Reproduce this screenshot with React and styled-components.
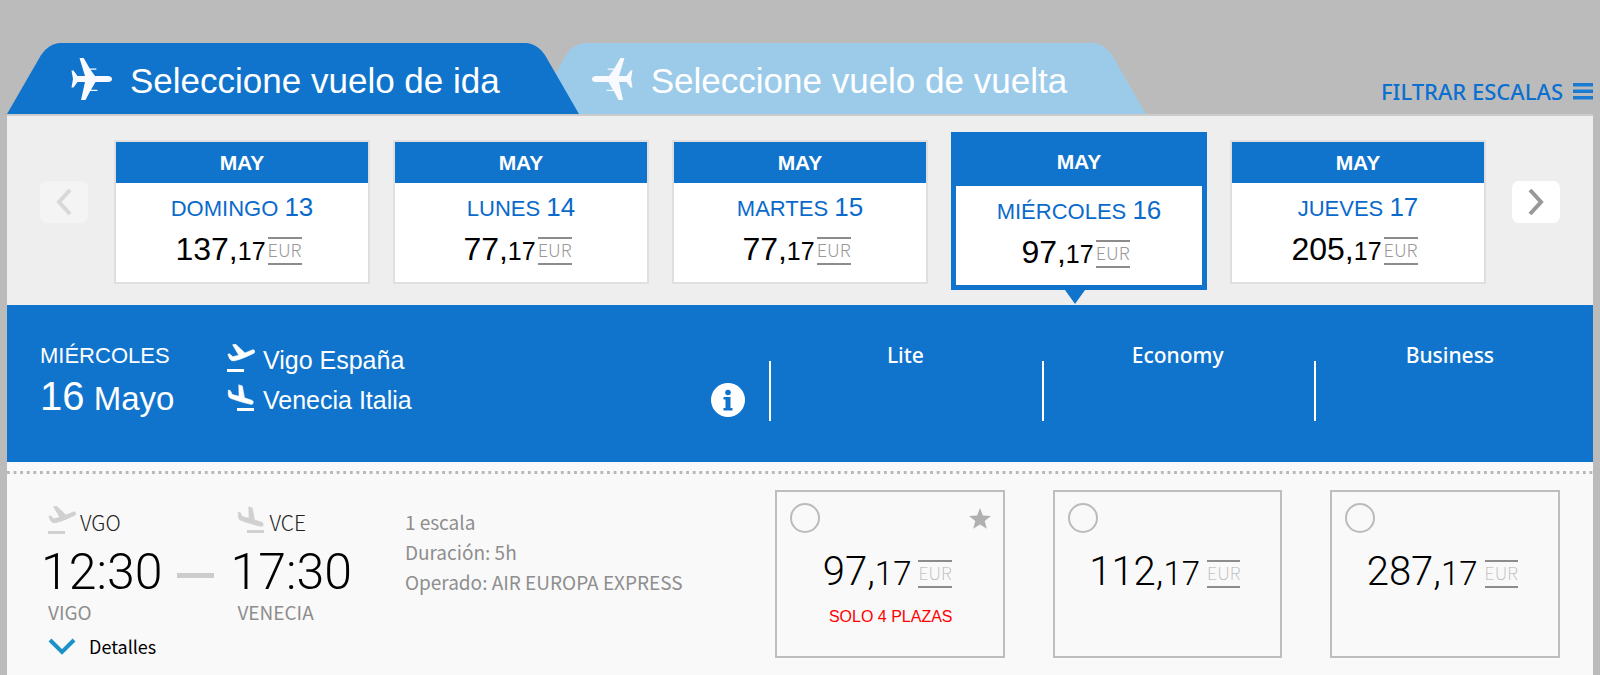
import React, { useState } from "react";
import styled, { createGlobalStyle, css } from "styled-components";

const GlobalStyle = createGlobalStyle`
  * {
    box-sizing: border-box;
  }

  body {
    margin: 0;
    background: #bbbbbb;
    font-family: "Liberation Sans", Arial, sans-serif;
    color: #000;
  }

  button {
    margin: 0;
    padding: 0;
    border: 0;
    background: none;
    color: inherit;
    font: inherit;
    cursor: pointer;
  }
`;

const blue = "#1074cc";
const sourceSans = `"Noto Sans CJK SC", "Noto Sans", sans-serif`;
const openSans = `"Noto Sans", "Open Sans", sans-serif`;

const Page = styled.div`
  padding: 43px 7px 0;
`;

const TopBar = styled.header`
  display: flex;
  align-items: flex-end;
  justify-content: space-between;
`;

const TabList = styled.div`
  display: flex;
`;

const Tab = styled.button`
  position: relative;
  z-index: ${(props) => (props.$active ? 2 : 1)};
  display: flex;
  align-items: center;
  gap: 18px;
  height: 71px;
  padding: 4px 79px 0 64px;
  color: #fff;
  font-size: 35px;
  white-space: nowrap;

  svg {
    margin-bottom: 4px;
  }

  & + & {
    margin-left: -47px;
    padding-left: 60px;
  }

  &::before,
  &::after {
    content: "";
    position: absolute;
    z-index: -1;
    top: 0;
    bottom: 0;
    width: 60%;
    background: ${(props) => (props.$active ? blue : "#9ccbea")};
  }

  &::before {
    left: 0;
    border-top-left-radius: 12px;
    transform: skewX(-30deg);
    transform-origin: bottom;
  }

  &::after {
    right: 0;
    border-top-right-radius: 12px;
    transform: skewX(30deg);
    transform-origin: bottom;
  }
`;

const FilterButton = styled.button`
  display: flex;
  align-items: center;
  gap: 10px;
  margin-bottom: 8px;
  color: #0a6fd0;
  font-family: ${openSans};
  font-size: 22px;
  font-weight: 500;
  line-height: 30px;
`;

const Panel = styled.main`
  border-top: 2px solid #cccccc;
  background: #f9f9f9;
`;

const Calendar = styled.section`
  display: flex;
  align-items: flex-start;
  gap: 26px;
  padding: 24px 33px 21px;
  background: #eeeeee;
`;

const Arrow = styled.button`
  display: flex;
  align-items: center;
  justify-content: center;
  width: 48px;
  height: 42px;
  margin-top: 41px;
  border-radius: 7px;
  background: #fff;
  color: #999;

  &:disabled {
    background: #f4f4f4;
    color: #d8d8d8;
    cursor: default;
  }
`;

const Days = styled.div`
  flex: 1;
  display: grid;
  grid-template-columns: repeat(5, 1fr);
  gap: 23px;
`;

const DayMonth = styled.span`
  display: block;
  background: ${blue};
  color: #fff;
  font-size: 21px;
  font-weight: bold;
  line-height: 41px;
`;

const DayName = styled.span`
  display: block;
  padding-top: 8px;
  color: #0a6acb;
  font-size: 22px;
  line-height: 32px;
`;

const DayNumber = styled.span`
  font-size: 26px;
`;

const DayCard = styled.button`
  position: relative;
  height: 144px;
  border: 2px solid #dfdfdf;
  background: #fff;
  text-align: center;
  display: flex;
  flex-direction: column;
  align-items: stretch;

  ${(props) =>
    props.$active &&
    css`
      height: 158px;
      margin: -8px 0 -6px;
      border: 5px solid ${blue};

      ${DayMonth} {
        line-height: 49px;
      }

      &::after {
        content: "";
        position: absolute;
        top: 100%;
        left: 50%;
        margin: 5px 0 0 -14px;
        border: 10px solid transparent;
        border-top: 14px solid ${blue};
        border-bottom: 0;
      }
    `}
`;

const Amount = styled.span`
  display: flex;
  align-items: baseline;
  justify-content: center;
  margin-top: 1px;
  padding-right: 7px;
  font-size: 32px;
  line-height: 46px;
`;

const Cents = styled.span`
  font-size: 25px;
`;

const Currency = styled.span`
  align-self: center;
  margin: 2px 0 0 2px;
  padding-bottom: 4px;
  border: solid #8c8c8c;
  border-width: 2px 0;
  color: #999;
  font-family: ${sourceSans};
  font-size: 18px;
  font-weight: 300;
  line-height: 20px;
`;

const Summary = styled.section`
  display: grid;
  grid-template-columns: 14fr 5fr 5fr 5fr;
  height: 157px;
  padding-right: 7px;
  background: ${blue};
  color: #fff;
`;

const Trip = styled.div`
  display: flex;
  padding: 35px 24px 0 33px;
`;

const TripDate = styled.div`
  width: 187px;
`;

const Weekday = styled.div`
  font-size: 22px;
  line-height: 32px;
`;

const MonthDay = styled.div`
  font-size: 33px;
  line-height: 48px;
`;

const BigDay = styled.span`
  font-size: 40px;
`;

const Route = styled.div`
  flex: 1;
`;

const Place = styled.div`
  display: flex;
  align-items: center;
  gap: 8px;
  font-size: 25px;
  line-height: 40px;

  svg {
    margin-bottom: 4px;
  }
`;

const InfoButton = styled.button`
  align-self: flex-start;
  height: 34px;
  margin-top: 43px;
`;

const FareName = styled.h2`
  position: relative;
  margin: 0;
  padding-top: 34px;
  font-family: ${openSans};
  font-size: 21px;
  font-weight: 500;
  line-height: 32px;
  text-align: center;

  &::before {
    content: "";
    position: absolute;
    top: 56px;
    left: 0;
    width: 2px;
    height: 60px;
    background: #fff;
  }
`;

const Dots = styled.hr`
  height: 3px;
  margin: 9px 0 0;
  border: 0;
  background: linear-gradient(90deg, #b8b8b8 50%, transparent 50%) 0 0 /
    calc(100% / 240) 3px repeat-x;
`;

const Flight = styled.article`
  display: flex;
  padding: 16px 33px;
`;

const FlightInfo = styled.div`
  flex: 15 1 0;
`;

const Legs = styled.div`
  display: flex;
  padding-top: 14px;
`;

const Airport = styled.div`
  display: flex;
  align-items: center;
  gap: 4px;
  padding-left: 8px;
  color: #222;
  font-family: ${sourceSans};
  font-size: 21px;
  font-weight: 300;
  line-height: 36px;

  svg {
    margin-bottom: 4px;
    color: #d0d0d0;
  }
`;

const Time = styled.time`
  display: block;
  padding: 5px 0 0 1px;
  font-family: Roboto, "Liberation Sans", sans-serif;
  font-size: 50px;
  font-weight: 300;
  line-height: 54px;
`;

const City = styled.div`
  padding-left: 8px;
  color: #8e8e8e;
  font-family: ${sourceSans};
  font-size: 19px;
  line-height: 26px;
`;

const Dash = styled.div`
  flex: none;
  width: 37px;
  height: 5px;
  margin: 69px 15px 0;
  background: #cccccc;
`;

const Details = styled.ul`
  margin: 0 0 0 53px;
  padding: 3px 0 0;
  list-style: none;
  color: #8e8e8e;
  font-family: ${sourceSans};
  font-size: 19px;
  line-height: 30px;
`;

const MoreButton = styled.button`
  display: flex;
  align-items: center;
  gap: 13px;
  padding: 7px 8px 0;
  font-family: ${sourceSans};
  font-size: 18px;
  line-height: 28px;
`;

const Fares = styled.div`
  flex: 16 1 0;
  display: flex;
  gap: 48px;
`;

const FareCard = styled.label`
  flex: 1;
  height: 168px;
  padding: 11px 12px 11px 13px;
  border: 2px solid #bebebe;
  cursor: pointer;

  ${Amount} {
    margin-top: 15px;
    font-family: Roboto, "Liberation Sans", sans-serif;
    font-size: 40px;
    font-weight: 300;
    line-height: 48px;
  }

  ${Cents} {
    font-size: 33px;
  }

  ${Currency} {
    margin-left: 7px;
    color: #b0b0b0;
    font-weight: 100;
  }
`;

const FareTop = styled.div`
  display: flex;
  align-items: center;
  justify-content: space-between;
`;

const Radio = styled.input`
  appearance: none;
  width: 30px;
  height: 30px;
  margin: 0;
  border: 2px solid #bbbbbb;
  border-radius: 50%;

  &:checked {
    border: 9px solid ${blue};
  }
`;

const SeatsLeft = styled.div`
  margin-top: 5px;
  color: #f00;
  font-size: 16px;
  line-height: 28px;
  text-align: center;
`;

const Plane = ({ back }) => (
  <svg width="41" height="42" viewBox="0 0 41 42" fill="#f8faff">
    <g transform={back ? "translate(41 0) scale(-1 1)" : undefined}>
      <path d="M8.500 0h4.200l6 10.500h6.300q1.500.6 0 1.200h-5.500L24 18h13.500q3.500.5 3.500 3t-3.500 3H24.500l-4.500 7.800h6q1.500.6 0 1.200h-6.800L14.500 42H10L14 24H6.500L2.500 29.500H.5L2 21 .5 12.500h2L6.500 18H14z" />
    </g>
  </svg>
);

const TakeOff = () => (
  <svg width="28" height="29" viewBox="0 0 28 29" fill="currentColor">
    <path
      transform="translate(-2.500 -4.800) scale(1.370)"
      stroke="currentColor"
      strokeWidth=".4"
      strokeLinejoin="round"
      d="M22.070 8.640c-.21-.8-1.040-1.080-1.840-.76L14.920 10l-6.900-6.430-2.130.51 4.540 7.570-4.370 1.130-2.470-2.140-1.150.39 1.220 3.160q1.200 2 3.600 1.600l4.080-1.120 4.350-1.760L21 10.490c.81-.23 1.280-1.050 1.070-1.850z"
    />
    <path d="M0 25h17v3H0z" />
  </svg>
);

const Landing = () => (
  <svg width="28" height="29" viewBox="0 0 28 29" fill="currentColor">
    <path
      transform="translate(-2.800 -2.200) scale(1.370)"
      stroke="currentColor"
      strokeWidth=".4"
      strokeLinejoin="round"
      d="M8.680 13.470l5.350 1.660 5.310 1.320c.8.210 1.620-.26 1.840-1.060.21-.8-.26-1.620-1.060-1.940l-5.310-1.720-1.560-8.720L10.620 2.200l.2 8.280L5.950 9.350l-1.530-2.920-1.450-.39v3.370q.2 2 1.600 2.630z"
    />
    <path d="M10 24h17v3H10z" />
  </svg>
);

const Chevron = ({ d, width, height, color = "currentColor" }) => (
  <svg width={width} height={height} viewBox={`0 0 ${width} ${height}`} fill="none">
    <path d={d} stroke={color} strokeWidth="4" />
  </svg>
);

const Bars = () => (
  <svg width="20" height="17" viewBox="0 0 20 17" fill="#1b7bd0">
    <path d="M0 0h20v3.500H0zM0 6.500h20V10H0zM0 13h20v3.500H0z" />
  </svg>
);

const Info = () => (
  <svg width="34" height="34" viewBox="0 0 34 34">
    <circle cx="17" cy="17" r="17" fill="#fff" />
    <circle cx="17" cy="9.500" r="2.800" fill={blue} />
    <path d="M12.500 14h7v11h2v2.500h-9V25h2v-8.500h-2z" fill={blue} />
  </svg>
);

const Star = () => (
  <svg width="22" height="21" viewBox="0 0 22 21" fill="#b0b0b0">
    <path d="M11 0l2.900 7.400 8.100.5-6.300 5 2.100 7.900L11 16.500l-6.800 4.300 2.100-7.900-6.300-5 8.100-.5z" />
  </svg>
);

const Price = ({ value }) => {
  const [units, cents] = value.split(",");
  return (
    <Amount>
      {units},<Cents>{cents}</Cents>
      <Currency>EUR</Currency>
    </Amount>
  );
};

const days = [
  { name: "DOMINGO", number: 13, price: "137,17" },
  { name: "LUNES", number: 14, price: "77,17" },
  { name: "MARTES", number: 15, price: "77,17" },
  { name: "MIÉRCOLES", number: 16, price: "97,17" },
  { name: "JUEVES", number: 17, price: "205,17" },
];

const fares = [
  { name: "Lite", price: "97,17", star: true, note: "SOLO 4 PLAZAS" },
  { name: "Economy", price: "112,17" },
  { name: "Business", price: "287,17" },
];

const App = () => {
  const [tab, setTab] = useState("ida");
  const [day, setDay] = useState(16);
  const [fare, setFare] = useState(null);

  return (
    <Page>
      <GlobalStyle />
      <TopBar>
        <TabList role="tablist">
          <Tab role="tab" aria-selected={tab === "ida"} $active={tab === "ida"} onClick={() => setTab("ida")}>
            <Plane />
            Seleccione vuelo de ida
          </Tab>
          <Tab role="tab" aria-selected={tab === "vuelta"} $active={tab === "vuelta"} onClick={() => setTab("vuelta")}>
            <Plane back />
            Seleccione vuelo de vuelta
          </Tab>
        </TabList>
        <FilterButton>
          FILTRAR ESCALAS
          <Bars />
        </FilterButton>
      </TopBar>

      <Panel>
        <Calendar>
          <Arrow disabled aria-label="Anterior">
            <Chevron width={16} height={26} d="M14 1L3 13l11 12" />
          </Arrow>
          <Days>
            {days.map((item) => (
              <DayCard key={item.number} $active={item.number === day} onClick={() => setDay(item.number)}>
                <DayMonth>MAY</DayMonth>
                <DayName>
                  {item.name} <DayNumber>{item.number}</DayNumber>
                </DayName>
                <Price value={item.price} />
              </DayCard>
            ))}
          </Days>
          <Arrow aria-label="Siguiente">
            <Chevron width={16} height={26} d="M2 1l11 12L2 25" />
          </Arrow>
        </Calendar>

        <Summary>
          <Trip>
            <TripDate>
              <Weekday>MIÉRCOLES</Weekday>
              <MonthDay>
                <BigDay>16</BigDay> Mayo
              </MonthDay>
            </TripDate>
            <Route>
              <Place>
                <TakeOff />
                Vigo España
              </Place>
              <Place>
                <Landing />
                Venecia Italia
              </Place>
            </Route>
            <InfoButton aria-label="Información">
              <Info />
            </InfoButton>
          </Trip>
          {fares.map((item) => (
            <FareName key={item.name}>{item.name}</FareName>
          ))}
        </Summary>

        <Dots />

        <Flight>
          <FlightInfo>
            <Legs>
              <div>
                <Airport>
                  <TakeOff />
                  VGO
                </Airport>
                <Time>12:30</Time>
                <City>VIGO</City>
              </div>
              <Dash />
              <div>
                <Airport>
                  <Landing />
                  VCE
                </Airport>
                <Time>17:30</Time>
                <City>VENECIA</City>
              </div>
              <Details>
                <li>1 escala</li>
                <li>Duración: 5h</li>
                <li>Operado: AIR EUROPA EXPRESS</li>
              </Details>
            </Legs>
            <MoreButton>
              <Chevron width={28} height={17} color="#1c93c8" d="M2 2l12 12L26 2" />
              Detalles
            </MoreButton>
          </FlightInfo>
          <Fares>
            {fares.map((item) => (
              <FareCard key={item.name}>
                <FareTop>
                  <Radio
                    type="radio"
                    name="fare"
                    aria-label={item.name}
                    checked={fare === item.name}
                    onChange={() => setFare(item.name)}
                  />
                  {item.star && <Star />}
                </FareTop>
                <Price value={item.price} />
                {item.note && <SeatsLeft>{item.note}</SeatsLeft>}
              </FareCard>
            ))}
          </Fares>
        </Flight>
      </Panel>
    </Page>
  );
};

export default App;
